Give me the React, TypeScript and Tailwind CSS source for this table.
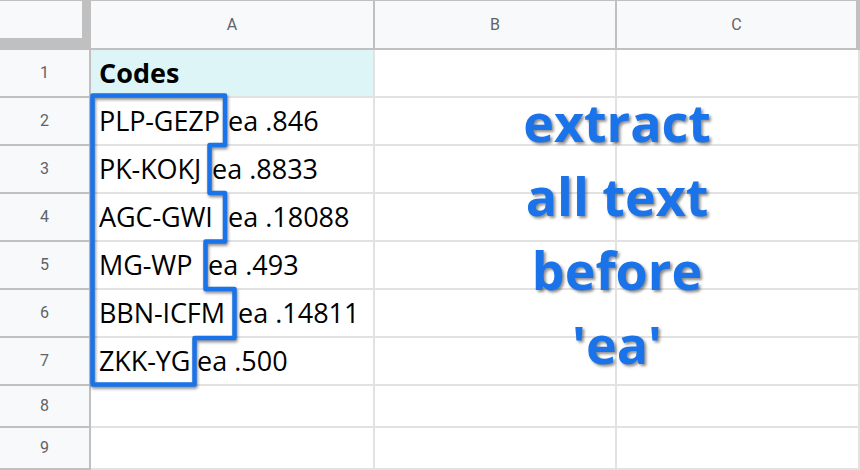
import React from "react";

const rows: { n: number; h: string; code?: string; rest?: string; w?: string; header?: boolean }[] = [
  { n: 1, h: "h-[48px]", code: "Codes", header: true },
  { n: 2, h: "h-[48px]", code: "PLP-GEZP", rest: "ea .846", w: "w-[129px]" },
  { n: 3, h: "h-[48px]", code: "PK-KOKJ", rest: "ea .8833", w: "w-[113px]" },
  { n: 4, h: "h-[48px]", code: "AGC-GWI", rest: "ea .18088", w: "w-[129px]" },
  { n: 5, h: "h-[48px]", code: "MG-WP", rest: "ea .493", w: "w-[109px]" },
  { n: 6, h: "h-[48px]", code: "BBN-ICFM", rest: "ea .14811", w: "w-[139px]" },
  { n: 7, h: "h-[48px]", code: "ZKK-YG", rest: "ea .500", w: "w-[98px]" },
  { n: 8, h: "h-[42px]" },
  { n: 9, h: "h-[42px]" },
];

export default function App() {
  return (
    <div className="relative w-[860px] h-[470px] overflow-hidden bg-white" style={{ fontFamily: "Roboto, 'Noto Sans', sans-serif" }}>
      <div className="grid grid-cols-[91px_284px_242px_241px_2px] border-t border-[#c0c0c0]">
        <div className="h-[49px] bg-[#c0c0c0] flex flex-col">
          <div className="w-[82px] h-[37px] bg-[#f8f9fa]" />
        </div>
        {["A", "B", "C"].map((c) => (
          <div
            key={c}
            className="h-[49px] bg-[#f8f9fa] border-b-2 border-r-2 border-[#c0c0c0] flex items-center justify-center text-[16px] text-[#5f6368]"
          >
            {c}
          </div>
        ))}
        <div className="h-[49px] bg-[#c0c0c0]" />

        {rows.map((r) => (
          <React.Fragment key={r.n}>
            <div
              className={`${r.h} bg-[#f8f9fa] border-r-2 border-b-2 border-[#c0c0c0] flex items-center justify-center text-[16px] text-[#5f6368]`}
            >
              {r.n}
            </div>
            <div
              className={`${r.h} ${r.header ? "bg-[#ddf5f7]" : "bg-white"} border-r-2 border-b-2 border-[#e2e2e2] flex items-center pl-2 whitespace-pre text-[27px] text-black`}
              style={{ fontFamily: "'Open Sans', sans-serif" }}
            >
              {r.header ? (
                <span className="font-bold">{r.code}</span>
              ) : r.code ? (
                <>
                  <span className={`${r.w} shrink-0 tracking-[-0.1px]`}>{r.code}</span>
                  <span>{r.rest}</span>
                </>
              ) : null}
            </div>
            <div className={`${r.h} bg-white border-r-2 border-b-2 border-[#e2e2e2]`} />
            <div className={`${r.h} bg-white border-b-2 border-[#e2e2e2]`} />
            <div className={`${r.h} bg-[#e2e2e2]`} />
          </React.Fragment>
        ))}
      </div>

      <svg
        className="absolute left-0 top-0 pointer-events-none drop-shadow-[1px_2px_1.5px_rgba(0,0,0,0.45)]"
        width="860"
        height="470"
        viewBox="0 0 860 470"
      >
        <path
          d="M92.5 95.5 H225 V145 H209.5 V193 H225 V241.5 H205.5 V289 H234.5 V338 H194.5 V384.5 H92.5 Z"
          fill="none"
          stroke="#1a73e8"
          strokeWidth="4.5"
          strokeLinejoin="round"
        />
      </svg>

      <div
        className="absolute left-[497px] top-[85px] w-[240px] text-center text-[52px] leading-[74px] font-bold text-[#1a73e8]"
        style={{ fontFamily: "'Open Sans', sans-serif", textShadow: "2px 2px 3px rgba(0,0,0,0.45)" }}
      >
        <div>extract</div>
        <div>all text</div>
        <div>before</div>
        <div>'ea'</div>
      </div>
    </div>
  );
}
